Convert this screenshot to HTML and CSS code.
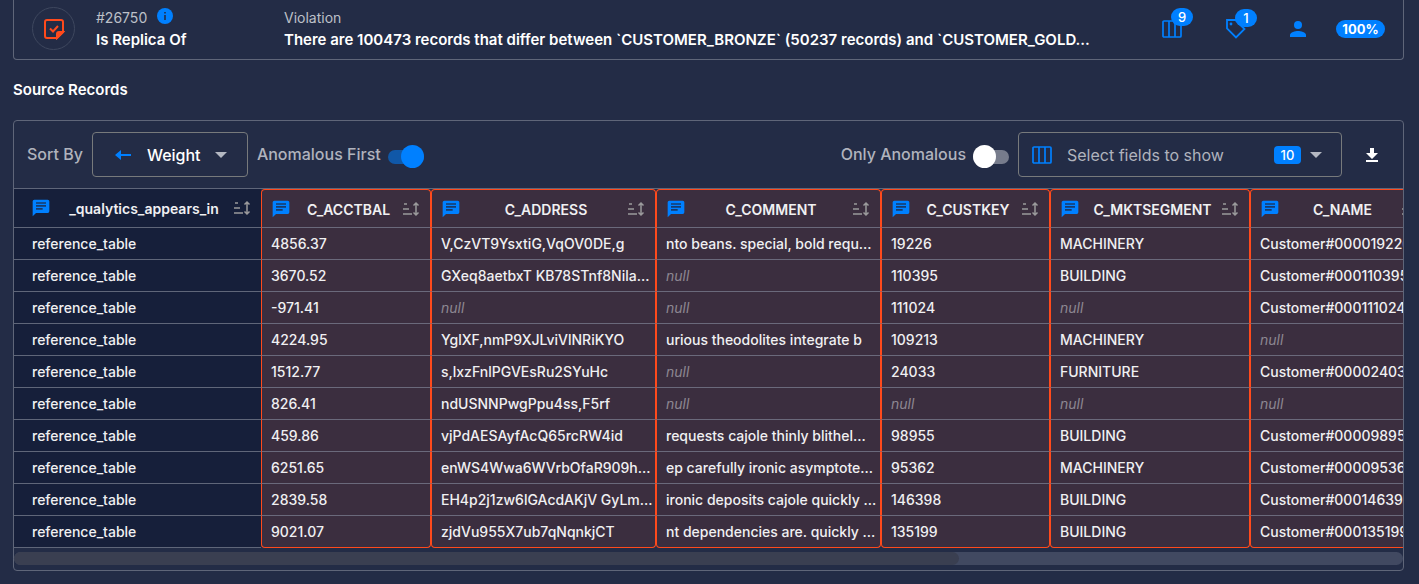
FILE: index.html
```html
<!DOCTYPE html>
<html lang="en">
<head>
<meta charset="utf-8">
<title>Source Records</title>
<link rel="stylesheet" href="styles.css">
</head>
<body>
<svg class="defs" aria-hidden="true">
  <symbol id="i-msg" viewBox="0 0 24 24"><path fill="#0080ff" d="M4 2h16a2 2 0 0 1 2 2v12a2 2 0 0 1-2 2H6l-4 4V4a2 2 0 0 1 2-2Z"/><path fill="#173a6b" d="M6 5h12v2H6zM6 8.500h12v2H6zM6 12h8v2H6z"/></symbol>
  <symbol id="i-sort" viewBox="0 0 18 16"><path fill="none" stroke="currentColor" stroke-width="1.500" d="M2 3h3M1 8h6M1 13h9M14 2v12M11.500 4.500 14 2l2.500 2.500M11.500 11.500 14 14l2.500-2.500"/></symbol>
  <symbol id="i-cols" viewBox="0 0 20 18"><path fill="none" stroke="currentColor" stroke-width="1.700" d="M2 1h16a1 1 0 0 1 1 1v14a1 1 0 0 1-1 1H2a1 1 0 0 1-1-1V2a1 1 0 0 1 1-1ZM7 1v16M13 1v16"/></symbol>
</svg>
<main class="page">
  <section class="summary">
    <span class="check-ring"><svg width="22" height="22" viewBox="0 0 22 22" fill="none" stroke="#ff4a1c" stroke-width="2"><path d="M4 2h14a2 2 0 0 1 2 2v10l-6 6H4a2 2 0 0 1-2-2V4a2 2 0 0 1 2-2Z"/><path fill="#ff4a1c" d="M20 14h-4a2 2 0 0 0-2 2v4Z"/><path d="m7 10.500 3 3 5-5.500"/></svg></span>
    <div class="check">
      <div class="muted">#26750 <svg class="info" width="16" height="16" viewBox="0 0 16 16"><circle cx="8" cy="8" r="8" fill="#0080ff"/><path fill="#232c46" d="M7.200 4h1.600v1.600H7.200zM7.200 7h1.600v5H7.200z"/></svg></div>
      <div class="strong">Is Replica Of</div>
    </div>
    <div class="violation">
      <div class="muted">Violation</div>
      <div class="strong">There are 100473 records that differ between `CUSTOMER_BRONZE` (50237 records) and `CUSTOMER_GOLD...</div>
    </div>
    <div class="stats">
      <span class="stat"><svg width="20" height="18"><use href="#i-cols"/></svg><span class="badge">9</span></span>
      <span class="stat"><svg width="20" height="20" viewBox="0 0 20 20"><path fill="none" stroke="currentColor" stroke-width="1.800" d="M1 1h8.500l9 9-8.500 8.500-9-9Z"/><circle cx="5" cy="5" r="1.400" fill="currentColor"/></svg><span class="badge">1</span></span>
      <svg class="person" width="16" height="16" viewBox="0 0 16 16" fill="currentColor"><circle cx="8" cy="4" r="4"/><path d="M0 16v-2c0-2.700 5.300-4 8-4s8 1.300 8 4v2z"/></svg>
      <span class="pill">100%</span>
    </div>
  </section>

  <h2 class="title">Source Records</h2>

  <section class="panel">
    <div class="toolbar">
      <span class="label">Sort By</span>
      <button class="picker sort" type="button"><svg width="16" height="12" viewBox="0 0 16 12"><path fill="#0080ff" d="M0 6l6-5v4h10v2H6v4z"/></svg><span>Weight</span><span class="caret"></span></button>
      <label class="label switch-row">Anomalous First<input class="switch" type="checkbox" checked></label>
      <label class="label switch-row only">Only Anomalous<input class="switch" type="checkbox"></label>
      <button class="picker fields" type="button"><svg width="20" height="18"><use href="#i-cols"/></svg><span class="hint">Select fields to show</span><span class="count">10</span><span class="caret"></span></button>
      <button class="download" type="button" aria-label="Download"><svg width="12" height="14" viewBox="0 0 12 14" fill="#fff"><path d="M4 0h4v5h4l-6 6-6-6h4zM0 12h12v2H0z"/></svg></button>
    </div>
    <div class="scroller">
      <table class="records">
        <colgroup><col class="w-source"><col class="w-s"><col class="w-l"><col class="w-l"><col class="w-key"><col class="w-m"><col class="w-name"></colgroup>
        <thead><tr id="head"></tr></thead>
        <tbody id="rows"></tbody>
      </table>
    </div>
    <div class="track"><div class="thumb"></div></div>
  </section>
</main>
<script src="app.js"></script>
</body>
</html>
```
FILE: app.js
```js
const columns = ["_qualytics_appears_in", "C_ACCTBAL", "C_ADDRESS", "C_COMMENT", "C_CUSTKEY", "C_MKTSEGMENT", "C_NAME"];
const records = [
  ["4856.37", "V,CzVT9YsxtiG,VqOV0DE,g", "nto beans. special, bold requ...", "19226", "MACHINERY", "Customer#000019226"],
  ["3670.52", "GXeq8aetbxT KB78STnf8Nila...", null, "110395", "BUILDING", "Customer#000110395"],
  ["-971.41", null, null, "111024", null, "Customer#000111024"],
  ["4224.95", "YglXF,nmP9XJLviVlNRiKYO", "urious theodolites integrate b", "109213", "MACHINERY", null],
  ["1512.77", "s,lxzFnlPGVEsRu2SYuHc", null, "24033", "FURNITURE", "Customer#000024033"],
  ["826.41", "ndUSNNPwgPpu4ss,F5rf", null, null, null, null],
  ["459.86", "vjPdAESAyfAcQ65rcRW4id", "requests cajole thinly blithel...", "98955", "BUILDING", "Customer#000098955"],
  ["6251.65", "enWS4Wwa6WVrbOfaR909h...", "ep carefully ironic asymptote...", "95362", "MACHINERY", "Customer#000095362"],
  ["2839.58", "EH4p2j1zw6lGAcdAKjV GyLm...", "ironic deposits cajole quickly ...", "146398", "BUILDING", "Customer#000146398"],
  ["9021.07", "zjdVu955X7ub7qNqnkjCT", "nt dependencies are. quickly ...", "135199", "BUILDING", "Customer#000135199"]
];
document.getElementById("head").innerHTML = columns.map(name =>
  `<th scope="col"><div class="head"><svg width="20" height="20"><use href="#i-msg"/></svg><span class="name">${name}</span><svg class="order" width="18" height="16"><use href="#i-sort"/></svg></div></th>`).join("");
document.getElementById("rows").innerHTML = records.map(record =>
  `<tr><td>reference_table</td>${record.map(v => v === null ? '<td class="null">null</td>' : `<td>${v}</td>`).join("")}</tr>`).join("");
```
FILE: styles.css
```css
* { box-sizing: border-box; }
body { margin: 0; background: #232c46; color: #fff; font: 500 15px/22px Inter, "Liberation Sans", sans-serif; }
button { font: inherit; color: inherit; background: none; padding: 0; cursor: pointer; }
svg { display: block; flex: none; }
.defs { position: absolute; width: 0; height: 0; }
.page { padding: 0 15px 12px 13px; }
.summary { display: flex; align-items: center; height: 60px; padding: 0 18px 2px; border: 1px solid #5f6679; border-top: 0; border-radius: 0 0 4px 4px; }
.check-ring { display: flex; align-items: center; justify-content: center; flex: none; width: 43px; height: 43px; border: 1px solid #3e475e; border-radius: 50%; }
.check { flex: none; width: 188px; margin-left: 21px; }
.violation { flex: 1; min-width: 0; }
.muted { display: flex; align-items: center; gap: 10px; color: #bdc0c8; font-size: 14px; font-weight: 400; }
.info { margin-bottom: 3px; }
.strong { white-space: nowrap; font-size: 15px; font-weight: 600; }
.stats { display: flex; align-items: center; flex: none; color: #0080ff; }
.stat { position: relative; width: 20px; margin-right: 44px; }
.badge { position: absolute; left: 9px; bottom: 12px; min-width: 22px; height: 18px; border-radius: 9px; background: #0080ff; color: #fff; font-size: 13px; line-height: 18px; text-align: center; }
.person { margin-right: 30px; }
.pill { width: 49px; height: 18px; border-radius: 9px; background: #0080ff; color: #fff; font-size: 13px; font-weight: 700; line-height: 18px; text-align: center; }
.title { margin: 19px 0; font-size: 15px; font-weight: 600; line-height: 22px; }
.panel { border: 1px solid #5f6679; border-radius: 4px; padding-bottom: 5px; }
.toolbar { display: flex; align-items: center; height: 67px; padding: 0 20px 0 13px; font-size: 16px; }
.label { padding-bottom: 2px; color: #b0b3bd; font-weight: 500; white-space: nowrap; }
.picker { display: flex; align-items: center; height: 45px; border: 1px solid #777a7c; border-radius: 4px; }
.sort { width: 156px; margin: 0 9px; padding: 0 20px 0 22px; }
.sort span:nth-child(2) { margin-left: 16px; }
.caret { margin-left: auto; border: 6px solid transparent; border-top-color: #b4b8c2; border-bottom: 0; }
.switch-row { display: flex; align-items: center; gap: 7px; }
.only { margin-left: auto; }
.switch { appearance: none; display: flex; align-items: center; width: 36px; height: 14px; margin: 6px 0 0; border-radius: 7px; background: #777c8c; }
.switch::before { content: ""; width: 23px; height: 23px; flex: none; border-radius: 50%; background: #fff; }
.switch:checked { justify-content: flex-end; background: #1058a8; }
.switch:checked::before { background: #0080ff; }
.fields { width: 324px; margin: 0 19px 0 9px; padding: 0 19px 0 13px; color: #0080ff; }
.hint { margin-left: 15px; color: #b0b3bd; font-weight: 400; }
.count { width: 27px; height: 18px; margin-left: auto; border-radius: 4px; background: #0080ff; color: #fff; font-size: 13px; line-height: 18px; }
.fields .caret { margin-left: 9px; }
.download { border: 0; padding: 0 5px; }
.scroller { overflow: hidden; border-top: 1px solid #5f6679; }
.records { width: 1416px; table-layout: fixed; border-collapse: separate; border-spacing: 0; }
.w-source { width: 247px; }
.w-s { width: 170px; }
.w-l { width: 225px; }
.w-key { width: 169px; }
.w-m { width: 200px; }
.w-name { width: 180px; }
.records th { height: 39px; padding: 0 10px 0 9px; font-size: 14px; font-weight: 600; }
.records td { height: 32px; padding: 0 9px; font-size: 14px; line-height: 20px; white-space: nowrap; }
.records th, .records td { border-bottom: 1px solid #6a697b; background: #3b2e3f; color: #f0f0f2; }
.records th:first-child, .records td:first-child { border-bottom-color: #5f6679; background: #161f3a; }
.records th:first-child { padding: 0 10px 0 17px; }
.records td:first-child { padding-left: 18px; }
.records th:not(:first-child), .records td:not(:first-child) { border-left: 1px solid #ff4a1c; border-right: 1px solid #ff4a1c; }
.records th:not(:first-child) { border-top: 1px solid #ff4a1c; border-radius: 4px 4px 0 0; }
.records tr:last-child td:not(:first-child) { border-bottom-color: #ff4a1c; border-radius: 0 0 4px 4px; }
.records .null { color: #8d8791; font-style: italic; font-weight: 400; }
.head { display: flex; align-items: center; }
.name { flex: 1; padding: 2px 0 0 4px; text-align: center; }
.order { color: #9b9a9c; }
.track { height: 13px; margin-top: 4px; border-radius: 7px; background: #414961; }
.thumb { width: 68%; height: 13px; border-radius: 7px; background: #3a3f51; }
```
